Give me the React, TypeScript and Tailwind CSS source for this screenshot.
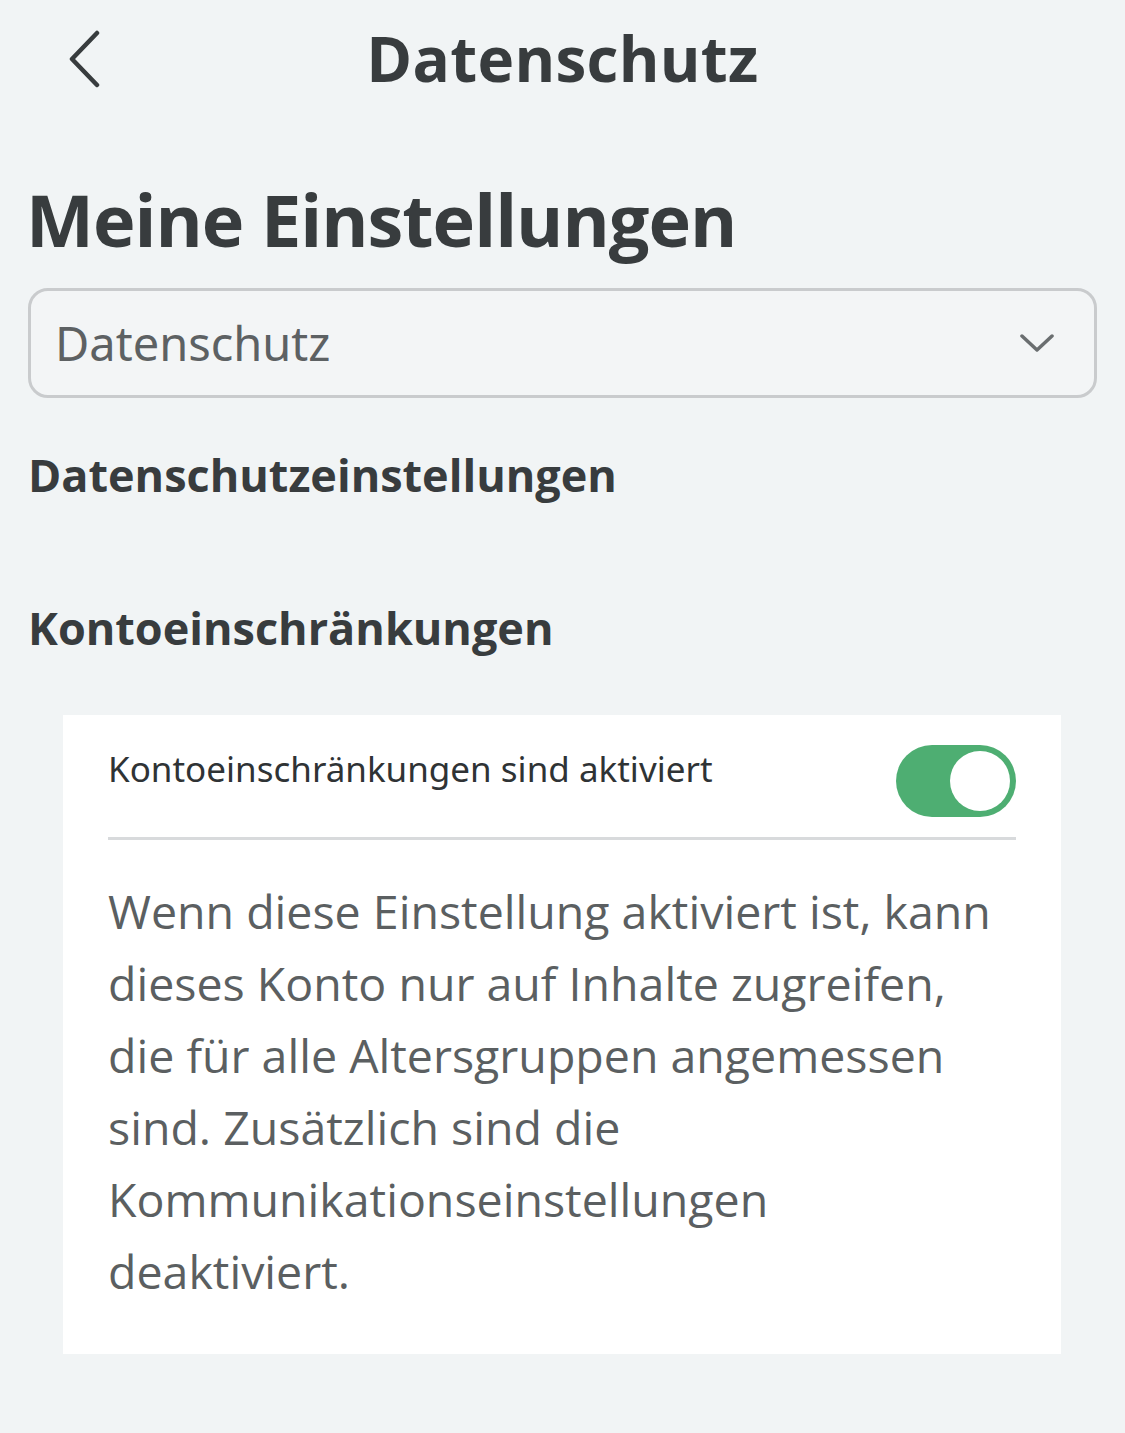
export default function App() {
  return (
    <div className="min-h-screen w-full bg-[#f1f4f5] text-[#383c3e]" style={{ fontFamily: '"Open Sans", sans-serif' }}>
      {/* Top bar */}
      <header className="relative flex h-[116px] items-center justify-center">
        <button className="absolute left-[62px] top-[26px] p-1" aria-label="Zurück">
          <svg width="36" height="58" viewBox="0 0 36 58" fill="none">
            <path d="M31 3 L6 29 L31 55" stroke="#383c3e" strokeWidth="4.5" strokeLinecap="round" strokeLinejoin="round" />
          </svg>
        </button>
        <h1 className="text-[62px] font-bold leading-none tracking-[0.3px]">Datenschutz</h1>
      </header>

      <main className="px-[28px] pt-[67px]">
        <h2 className="-ml-[2px] text-[72px] font-bold leading-none tracking-[-1px]">Meine Einstellungen</h2>

        <div className="mt-[33px] flex h-[110px] items-center justify-between rounded-[20px] border-[3px] border-[#c9cbcd] bg-[#f3f5f6] pl-[24px] pr-[40px]">
          <span className="text-[47px] leading-none text-[#5d6163]" style={{ fontFamily: '"Noto Sans", sans-serif' }}>Datenschutz</span>
          <svg width="34" height="20" viewBox="0 0 34 20" fill="none">
            <path d="M2 3 L17 17 L32 3" stroke="#6a6e70" strokeWidth="3.5" strokeLinecap="round" strokeLinejoin="round" />
          </svg>
        </div>

        <h3 className="mt-[54px] text-[45px] font-bold leading-none">Datenschutzeinstellungen</h3>

        <h3 className="mt-[108px] text-[45px] font-bold leading-none">Kontoeinschränkungen</h3>

        <section className="ml-[35px] mr-[36px] mt-[65px] bg-white px-[45px] pb-[47px] pt-[30px]">
          <div className="flex items-start justify-between border-b-[3px] border-[#d8dadc] pb-[20px]">
            <span className="pt-[6px] text-[35px] leading-none text-[#2f3335]" style={{ fontFamily: '"Noto Sans", sans-serif' }}>Kontoeinschränkungen sind aktiviert</span>
            <div className="flex h-[72px] w-[120px] items-center justify-end rounded-full bg-[#4eae72] p-[6px]">
              <div className="h-[60px] w-[60px] rounded-full bg-white" />
            </div>
          </div>
          <p className="mt-[35px] text-[46.5px] leading-[72px] text-[#5b5f61]">
            Wenn diese Einstellung aktiviert ist, kann dieses Konto nur auf Inhalte zugreifen, die für alle Altersgruppen angemessen sind. Zusätzlich sind die Kommunikationseinstellungen deaktiviert.
          </p>
        </section>
      </main>
    </div>
  );
}
